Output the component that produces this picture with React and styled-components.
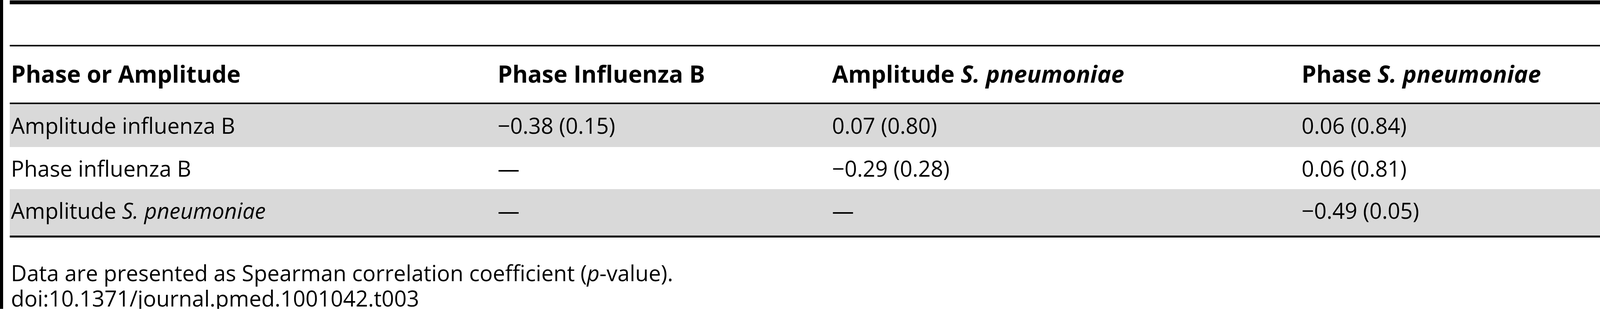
import React from "react";
import styled, { createGlobalStyle } from "styled-components";

const Global = createGlobalStyle`
  html, body { margin: 0; padding: 0; background: #fff; }
  body { font-family: "Open Sans", "Noto Sans", sans-serif; color: #000; }
`;

const Page = styled.div`
  box-sizing: border-box;
  height: 792px;
  border-left: 8px solid #000;
  padding-left: 17px;
  padding-top: 1px;
`;

const Table = styled.div`
  display: flex;
  flex-direction: column;
  border-top: 10px solid #000;
`;

const CaptionGap = styled.div`
  height: 104px;
  border-bottom: 4px solid #000;
`;

const Row = styled.div`
  box-sizing: border-box;
  display: grid;
  grid-template-columns: 1246px 856px 1202px 1fr;
  height: ${(p) => p.$h}px;
  padding-top: ${(p) => p.$pt}px;
  background: ${(p) => (p.$shade ? "#d9d9d9" : "#fff")};
  border-bottom: ${(p) => (p.$rule ? `${p.$rule}px solid #000` : "none")};
  font-size: ${(p) => (p.$head ? 60 : 56)}px;
  font-weight: ${(p) => (p.$head ? 700 : 400)};
  line-height: normal;
  white-space: nowrap;
`;

const Cell = styled.div`
  padding-left: 3px;
`;

const Footnote = styled.div`
  margin-top: 58px;
  padding-left: 3px;
  font-size: 56px;
  line-height: 65px;
  white-space: nowrap;
`;

const M = "\u2212";
const D = "\u2014";

const rows = [
  {
    h: 110,
    shade: true,
    cells: ["Amplitude influenza B", `${M}0.38 (0.15)`, "0.07 (0.80)", "0.06 (0.84)"],
  },
  {
    h: 108,
    shade: false,
    cells: ["Phase influenza B", D, `${M}0.29 (0.28)`, "0.06 (0.81)"],
  },
  {
    h: 124,
    shade: true,
    rule: 5,
    cells: [
      <>
        Amplitude <i>S. pneumoniae</i>
      </>,
      D,
      D,
      `${M}0.49 (0.05)`,
    ],
  },
];

export default function App() {
  return (
    <>
      <Global />
      <Page>
        <Table>
          <CaptionGap />
          <Row $head $h={148} $pt={29} $rule={4}>
            <Cell>Phase or Amplitude</Cell>
            <Cell>Phase Influenza B</Cell>
            <Cell>
              Amplitude <i>S. pneumoniae</i>
            </Cell>
            <Cell>
              Phase <i>S. pneumoniae</i>
            </Cell>
          </Row>
          {rows.map((r, i) => (
            <Row key={i} $h={r.h} $pt={16} $shade={r.shade} $rule={r.rule}>
              {r.cells.map((c, j) => (
                <Cell key={j}>{c}</Cell>
              ))}
            </Row>
          ))}
        </Table>
        <Footnote>
          Data are presented as Spearman correlation coefficient (<i>p</i>-value).
          <br />
          doi:10.1371/journal.pmed.1001042.t003
        </Footnote>
      </Page>
    </>
  );
}
